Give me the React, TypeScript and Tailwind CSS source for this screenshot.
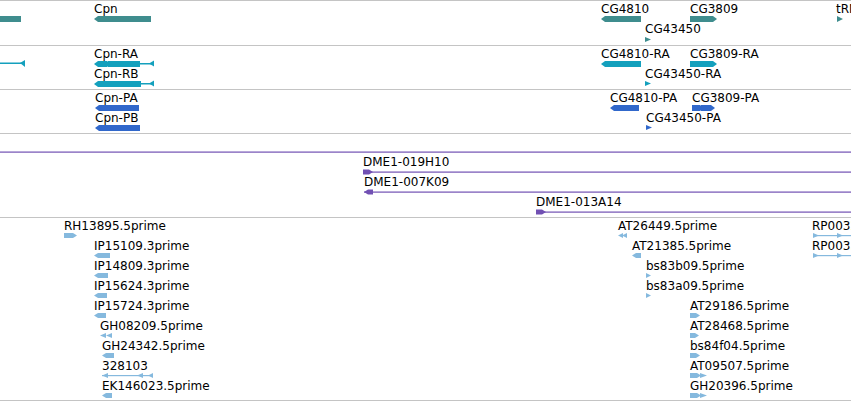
const TEAL = '#3f8d8e'
const CYAN = '#14a0bd'
const BLUE = '#3168cb'
const PURPLE = '#7150b3'
const LIGHT = '#85b9de'

type Label = { x: number; row: number; text: string }

// polygon helpers, coordinates are track-relative pixels
const arrowL = (x0: number, x1: number, y: number, h = 6) =>
  `${x0},${y + h / 2} ${x0 + 4},${y} ${x1},${y} ${x1},${y + h} ${x0 + 4},${y + h}`
const arrowR = (x0: number, x1: number, y: number, h = 6) =>
  `${x0},${y} ${x1 - 4},${y} ${x1},${y + h / 2} ${x1 - 4},${y + h} ${x0},${y + h}`
const triR = (x: number, y: number, w = 6, h = 6) => `${x},${y} ${x + w},${y + h / 2} ${x},${y + h}`
const triL = (x: number, y: number, w = 6, h = 6) => `${x},${y + h / 2} ${x + w},${y} ${x + w},${y + h}`

function Track({
  height,
  labels,
  children,
}: {
  height: number
  labels: Label[]
  children: React.ReactNode
}) {
  return (
    <div className="relative w-full border-t border-[#c4c4c4]" style={{ height }}>
      <svg className="absolute inset-0 h-full w-full" width={851} height={height - 1}>
        {children}
      </svg>
      {labels.map((l) => (
        <div
          key={l.text + l.x}
          className="absolute whitespace-nowrap text-[12px] leading-[14px] text-black"
          style={{ left: l.x, top: 1 + l.row * 20 }}
        >
          {l.text}
        </div>
      ))}
    </div>
  )
}

const geneLabels: Label[] = [
  { x: 94, row: 0, text: 'Cpn' },
  { x: 601, row: 0, text: 'CG4810' },
  { x: 690, row: 0, text: 'CG3809' },
  { x: 645, row: 1, text: 'CG43450' },
  { x: 836, row: 0, text: 'tRNA:Leu-CAA' },
]

const rnaLabels: Label[] = [
  { x: 94, row: 0, text: 'Cpn-RA' },
  { x: 94, row: 1, text: 'Cpn-RB' },
  { x: 601, row: 0, text: 'CG4810-RA' },
  { x: 690, row: 0, text: 'CG3809-RA' },
  { x: 645, row: 1, text: 'CG43450-RA' },
]

const protLabels: Label[] = [
  { x: 95, row: 0, text: 'Cpn-PA' },
  { x: 95, row: 1, text: 'Cpn-PB' },
  { x: 610, row: 0, text: 'CG4810-PA' },
  { x: 692, row: 0, text: 'CG3809-PA' },
  { x: 646, row: 1, text: 'CG43450-PA' },
]

const bacLabels: Label[] = [
  { x: 363, row: 1, text: 'DME1-019H10' },
  { x: 364, row: 2, text: 'DME1-007K09' },
  { x: 536, row: 3, text: 'DME1-013A14' },
]

const estLabels: Label[] = [
  { x: 64, row: 0, text: 'RH13895.5prime' },
  { x: 94, row: 1, text: 'IP15109.3prime' },
  { x: 94, row: 2, text: 'IP14809.3prime' },
  { x: 94, row: 3, text: 'IP15624.3prime' },
  { x: 94, row: 4, text: 'IP15724.3prime' },
  { x: 100, row: 5, text: 'GH08209.5prime' },
  { x: 102, row: 6, text: 'GH24342.5prime' },
  { x: 102, row: 7, text: '328103' },
  { x: 102, row: 8, text: 'EK146023.5prime' },
  { x: 618, row: 0, text: 'AT26449.5prime' },
  { x: 632, row: 1, text: 'AT21385.5prime' },
  { x: 646, row: 2, text: 'bs83b09.5prime' },
  { x: 646, row: 3, text: 'bs83a09.5prime' },
  { x: 690, row: 4, text: 'AT29186.5prime' },
  { x: 690, row: 5, text: 'AT28468.5prime' },
  { x: 690, row: 6, text: 'bs84f04.5prime' },
  { x: 690, row: 7, text: 'AT09507.5prime' },
  { x: 690, row: 8, text: 'GH20396.5prime' },
  { x: 812, row: 0, text: 'RP00326.5prime' },
  { x: 812, row: 1, text: 'RP00338.5prime' },
]

const gy = (row: number) => 15 + row * 20

export default function App() {
  return (
    <div className="h-[401px] w-[851px] overflow-hidden bg-white font-['DejaVu_Sans',sans-serif]">
      <Track height={45} labels={geneLabels}>
        <g fill={TEAL}>
          <rect x={0} y={15} width={21} height={6} />
          <polygon points={arrowL(94, 151, 15)} />
          <polygon points={arrowL(601, 641, 15)} />
          <polygon points={arrowR(690, 717, 15)} />
          <polygon points={triR(645, 36, 6, 5)} />
          <polygon points={triR(837, 15, 6, 6)} />
        </g>
      </Track>

      <Track height={44} labels={rnaLabels}>
        <g fill={CYAN}>
          <rect x={0} y={16.5} width={22} height={1.5} />
          <polygon points="20,17 25,14 25,21" />
          <polygon points={arrowL(94, 107, 15)} />
          <polygon points={arrowL(104, 140, 15)} />
          <rect x={140} y={17} width={12} height={1.5} />
          <polygon points={triL(149, 14.5, 5, 6)} />
          <polygon points={arrowL(94, 141, 35)} />
          <rect x={141} y={37} width={11} height={1.5} />
          <polygon points={triL(149, 34.5, 5, 6)} />
          <polygon points={arrowL(601, 623, 15)} />
          <polygon points={arrowL(619, 641, 15)} />
          <polygon points={arrowR(690, 705, 15)} />
          <polygon points={arrowR(701, 717, 15)} />
          <polygon points={triR(645, 35, 6, 5)} />
        </g>
      </Track>

      <Track height={44} labels={protLabels}>
        <g fill={BLUE}>
          <polygon points={arrowL(95, 107, 15)} />
          <polygon points={arrowL(101, 139, 15)} />
          <polygon points={arrowL(95, 140, 35)} />
          <polygon points={arrowL(610, 626, 15)} />
          <polygon points={arrowL(622, 639, 15)} />
          <polygon points={arrowR(692, 704, 15)} />
          <polygon points={arrowR(701, 715, 15)} />
          <polygon points={triR(646, 35, 6, 5)} />
        </g>
      </Track>

      <Track height={84} labels={bacLabels}>
        <g fill={PURPLE}>
          <rect x={0} y={17.5} width={851} height={1.2} />
          <rect x={363} y={37.5} width={488} height={1.2} />
          <polygon points={arrowR(363, 373, 35.5, 5)} />
          <rect x={364} y={57.5} width={487} height={1.2} />
          <polygon points={arrowL(364, 373, 55.5, 5)} />
          <rect x={536} y={77.5} width={315} height={1.2} />
          <polygon points={arrowR(536, 546, 75.5, 5)} />
        </g>
      </Track>

      <div className="border-b border-[#c4c4c4]">
        <Track height={183} labels={estLabels}>
          <g fill={LIGHT}>
            <polygon points={arrowR(64, 77, gy(0), 5)} />
            <polygon points={arrowL(94, 110, gy(1), 5)} />
            <polygon points={arrowL(94, 108, gy(2), 5)} />
            <polygon points={arrowL(94, 107, gy(3), 5)} />
            <polygon points={arrowL(94, 106, gy(4), 5)} />
            <polygon points={triL(100, gy(5), 6, 5)} />
            <polygon points={triL(106, gy(5), 6, 5)} />
            <polygon points={arrowL(102, 114, gy(6), 5)} />
            <rect x={102} y={gy(7) + 2} width={51} height={1.2} />
            <polygon points={triL(102, gy(7), 6, 5)} />
            <polygon points={triL(137, gy(7), 6, 5)} />
            <polygon points={triL(148, gy(7), 5, 5)} />
            <polygon points={arrowL(102, 112, gy(8), 5)} />

            <polygon points={triL(618, gy(0), 5, 5)} />
            <polygon points={triL(622, gy(0), 5, 5)} />
            <polygon points={arrowL(632, 641, gy(1), 5)} />
            <polygon points={triR(646, gy(2), 5, 5)} />
            <polygon points={triR(646, gy(3), 5, 5)} />
            <polygon points={arrowR(690, 700, gy(4), 5)} />
            <polygon points={arrowR(690, 699, gy(5), 5)} />
            <polygon points={arrowR(690, 700, gy(6), 5)} />
            <polygon points={arrowR(690, 701, gy(7), 5)} />
            <polygon points={triR(700, gy(7), 7, 5)} />
            <polygon points={arrowR(690, 701, gy(8), 5)} />
            <polygon points={triR(700, gy(8), 7, 5)} />

            <rect x={813} y={gy(0) + 2} width={38} height={1.2} />
            <polygon points={triR(813, gy(0), 6, 5)} />
            <polygon points={triR(837, gy(0), 6, 5)} />
            <rect x={813} y={gy(1) + 2} width={38} height={1.2} />
            <polygon points={triR(813, gy(1), 6, 5)} />
            <polygon points={triR(837, gy(1), 6, 5)} />
          </g>
        </Track>
      </div>
    </div>
  )
}
